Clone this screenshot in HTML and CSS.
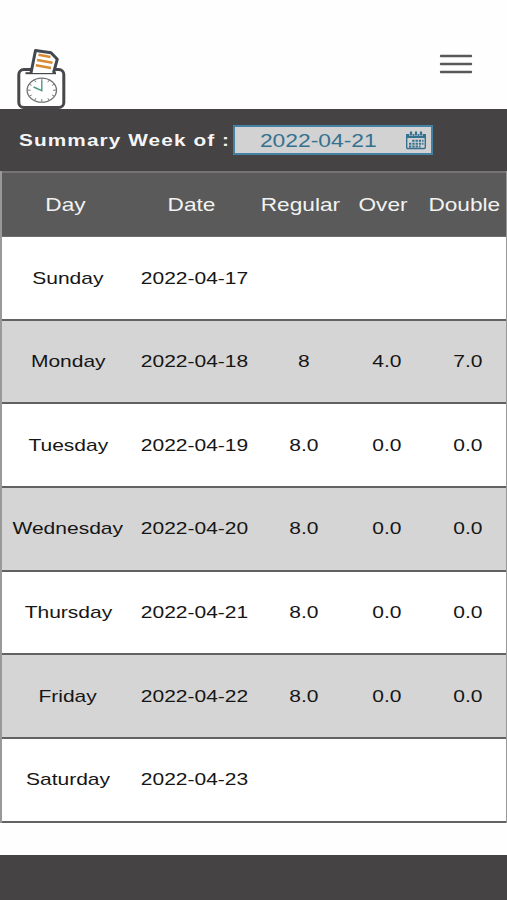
FILE: index.html
```html
<!DOCTYPE html>
<html lang="en">
<head>
<meta charset="utf-8">
<title>Summary Week</title>
<link rel="stylesheet" href="styles.css">
</head>
<body>
<header class="top">
  <svg class="logo" viewBox="0 0 54 64" fill="none">
    <rect x="4.8" y="23.5" width="45" height="38" rx="5" fill="#fff" stroke="#48484a" stroke-width="3"/>
    <path d="M11.5 27.2H42" stroke="#48484a" stroke-width="2"/>
    <path d="M17 27L21.5 4.5L37 6.7L43.3 13.2L39.5 27" fill="#fff" stroke="#414850" stroke-width="3" stroke-linejoin="round"/>
    <path d="M24.5 8.8L36.5 11M23 14L38.5 16.8M21.8 19.2L37 22" stroke="#d88b32" stroke-width="2.5"/>
    <ellipse cx="27.8" cy="44.2" rx="14.7" ry="12" stroke="#707476" stroke-width="1.3"/>
    <g transform="translate(1.1 -.3)">
      <path d="M26.7 33V35.5M26.7 53.5V56M12.5 44.5H15.5M38 44.5H41M19.5 34.5L20.7 36.5M34 34.5L32.7 36.5M19.5 54.5L20.7 52.5M34 54.5L32.7 52.5M14.2 38.5L16.5 39.7M39.2 38.5L37 39.7M14.2 50.5L16.5 49.3M39.2 50.5L37 49.3" stroke="#777" stroke-width="1"/>
      <path d="M26.7 35V45L18.5 41.3" stroke="#4c9a83" stroke-width="1.4"/>
    </g>
  </svg>
  <svg class="menu" viewBox="0 0 34 22" stroke="#59595a" stroke-width="2.4" stroke-linecap="round"><path d="M2 3H32M2 11H32M2 19H32"/></svg>
</header>
<section class="week">
  <span class="label"><span class="wide">Summary Week of :</span></span>
  <div class="picker">
    <span class="value"><span class="wide">2022-04-21</span></span>
    <svg class="calendar" viewBox="0 0 22 19" fill="none">
      <rect x="1.7" y="3.7" width="18.6" height="13.8" rx="1" stroke="#35718f" stroke-width="1.4"/>
      <path d="M1 3H21V7H1Z" fill="#35718f"/>
      <path d="M6 2V5M11 2V5M16 2V5" stroke="#c9d2d6" stroke-width="3.4"/>
      <path d="M6 .5V4.5M11 .5V4.5M16 .5V4.5" stroke="#35718f" stroke-width="2.2"/>
      <path d="M7.2 9.8H18.5M4 12.7H18.5M4 15.4H15.5" stroke="#35718f" stroke-width="2" stroke-dasharray="2.3 1"/>
    </svg>
  </div>
</section>
<main class="table">
  <div class="row head"><span class="wide">Day</span><span class="wide">Date</span><span class="wide">Regular</span><span class="wide">Over</span><span class="wide">Double</span></div>
  <div class="row"><span class="wide">Sunday</span><span class="wide">2022-04-17</span></div>
  <div class="row alt"><span class="wide">Monday</span><span class="wide">2022-04-18</span><span class="wide">8</span><span class="wide">4.0</span><span class="wide">7.0</span></div>
  <div class="row"><span class="wide">Tuesday</span><span class="wide">2022-04-19</span><span class="wide">8.0</span><span class="wide">0.0</span><span class="wide">0.0</span></div>
  <div class="row alt"><span class="wide">Wednesday</span><span class="wide">2022-04-20</span><span class="wide">8.0</span><span class="wide">0.0</span><span class="wide">0.0</span></div>
  <div class="row"><span class="wide">Thursday</span><span class="wide">2022-04-21</span><span class="wide">8.0</span><span class="wide">0.0</span><span class="wide">0.0</span></div>
  <div class="row alt"><span class="wide">Friday</span><span class="wide">2022-04-22</span><span class="wide">8.0</span><span class="wide">0.0</span><span class="wide">0.0</span></div>
  <div class="row"><span class="wide">Saturday</span><span class="wide">2022-04-23</span></div>
</main>
<footer class="foot"></footer>
</body>
</html>
```
FILE: styles.css
```css
* { box-sizing: border-box; }
body {
  margin: 0;
  height: 900px;
  display: flex;
  flex-direction: column;
  overflow: hidden;
  background: #fefefe;
  color: #161616;
  font: 17px "Liberation Sans", Arial, sans-serif;
}
.wide { display: inline-block; transform: scaleX(1.235); white-space: nowrap; }
.top {
  height: 109px;
  flex: none;
  display: flex;
  justify-content: space-between;
  align-items: flex-start;
  padding: 46px 34px 0 14px;
}
.logo { width: 54px; height: 64px; margin-bottom: -1px; }
.menu { width: 34px; height: 22px; margin-top: 7px; }
.week {
  height: 62px;
  flex: none;
  display: flex;
  align-items: center;
  padding-left: 19px;
  background: #454344;
}
.label { width: 214px; padding-top: 2px; color: #f5f5f5; font-size: 17px; font-weight: bold; letter-spacing: .9px; }
.label .wide { transform: scaleX(1.222); transform-origin: left; }
.picker {
  width: 200px;
  height: 30px;
  display: flex;
  align-items: center;
  justify-content: space-between;
  padding-right: 4px;
  border: 2px solid #4481a2;
  background: #d2d2d2;
}
.value { width: 166px; padding-top: 1px; text-align: center; color: #35718f; font-size: 18.5px; }
.calendar { width: 22px; height: 19px; }
.table {
  height: 652px;
  flex: none;
  border: solid #999;
  border-width: 0 1px 0 2px;
  overflow: hidden;
}
.row {
  height: 83.65px;
  display: grid;
  grid-template-columns: 132px 121px 97px 70px 91px;
  align-items: center;
  justify-items: center;
  padding-top: 1px;
  border-bottom: 2px solid #626262;
  background: #fff;
}
.alt { background: #d5d5d5; }
.head {
  height: 66.2px;
  padding-top: 0;
  grid-template-columns: 126px 127px 90px 77px 84px;
  border-top: 2px solid #747474;
  border-bottom: 1px solid #6d6d6d;
  background: #5a5a5a;
  color: #f2f2f2;
  font-size: 18.5px;
}
.head .wide { transform: scaleX(1.225); }
.foot { height: 45px; flex: none; margin-top: 32px; background: #454344; }
```
